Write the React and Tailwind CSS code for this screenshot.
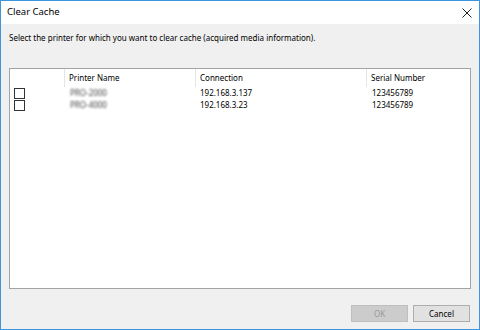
import React from 'react';

const printers = [
  { name: 'PRO-2000', ip: '192.168.3.137', serial: '123456789' },
  { name: 'PRO-4000', ip: '192.168.3.23', serial: '123456789' },
];

export default function App() {
  return (
    <div
      className="w-[480px] h-[330px] flex flex-col border border-[#3d95dd] bg-[#f0f0f0] text-[8px] text-black"
      style={{ fontFamily: '"Noto Sans", "Liberation Sans", sans-serif' }}
    >
      {/* Title bar */}
      <div className="h-[23px] shrink-0 bg-white flex items-center justify-between pl-[6px] pr-[6px]">
        <span className="text-[9.5px]">Clear Cache</span>
        <svg width="10" height="10" viewBox="0 0 10 10" className="mr-[1px]">
          <path d="M0.5 0.5 L9.5 9.5 M9.5 0.5 L0.5 9.5" stroke="#222" strokeWidth="1" />
        </svg>
      </div>

      {/* Body */}
      <div className="flex-1 flex flex-col px-[8px]">
        <p className="mt-[8px] h-[12px] leading-[12px]">
          Select the printer for which you want to clear cache (acquired media information).
        </p>

        <div className="mt-[24px] h-[221px] bg-white border border-[#a3a3a3]">
          {/* Header */}
          <div className="flex h-[18px] items-center">
            <div className="w-[55px] h-full border-r border-[#e5e5e5]" />
            <div className="w-[131px] h-full border-r border-[#e5e5e5] pl-[4px] flex items-center">Printer Name</div>
            <div className="w-[171px] h-full border-r border-[#e5e5e5] pl-[4px] flex items-center">Connection</div>
            <div className="flex-1 h-full pl-[4px] flex items-center">Serial Number</div>
          </div>
          {/* Rows */}
          {printers.map((p) => (
            <div key={p.ip} className="flex h-[12px] items-center">
              <div className="w-[55px] pl-[4px] flex items-center">
                <div className="w-[11px] h-[11px] border border-[#333] bg-white" />
              </div>
              <div className="w-[131px] pl-[5px]">
                <span className="blur-[1px] text-[#444]">{p.name}</span>
              </div>
              <div className="w-[171px] pl-[4px]">{p.ip}</div>
              <div className="flex-1 pl-[5px]">{p.serial}</div>
            </div>
          ))}
        </div>

        {/* Buttons */}
        <div className="mt-[16px] flex justify-end gap-[5px] pr-[1px]">
          <button className="w-[57px] h-[17px] bg-[#cccccc] border border-[#bfbfbf] text-[#9a9a9a] leading-none">
            OK
          </button>
          <button className="w-[57px] h-[17px] bg-[#e1e1e1] border border-[#adadad] text-black leading-none">
            Cancel
          </button>
        </div>
      </div>
    </div>
  );
}
